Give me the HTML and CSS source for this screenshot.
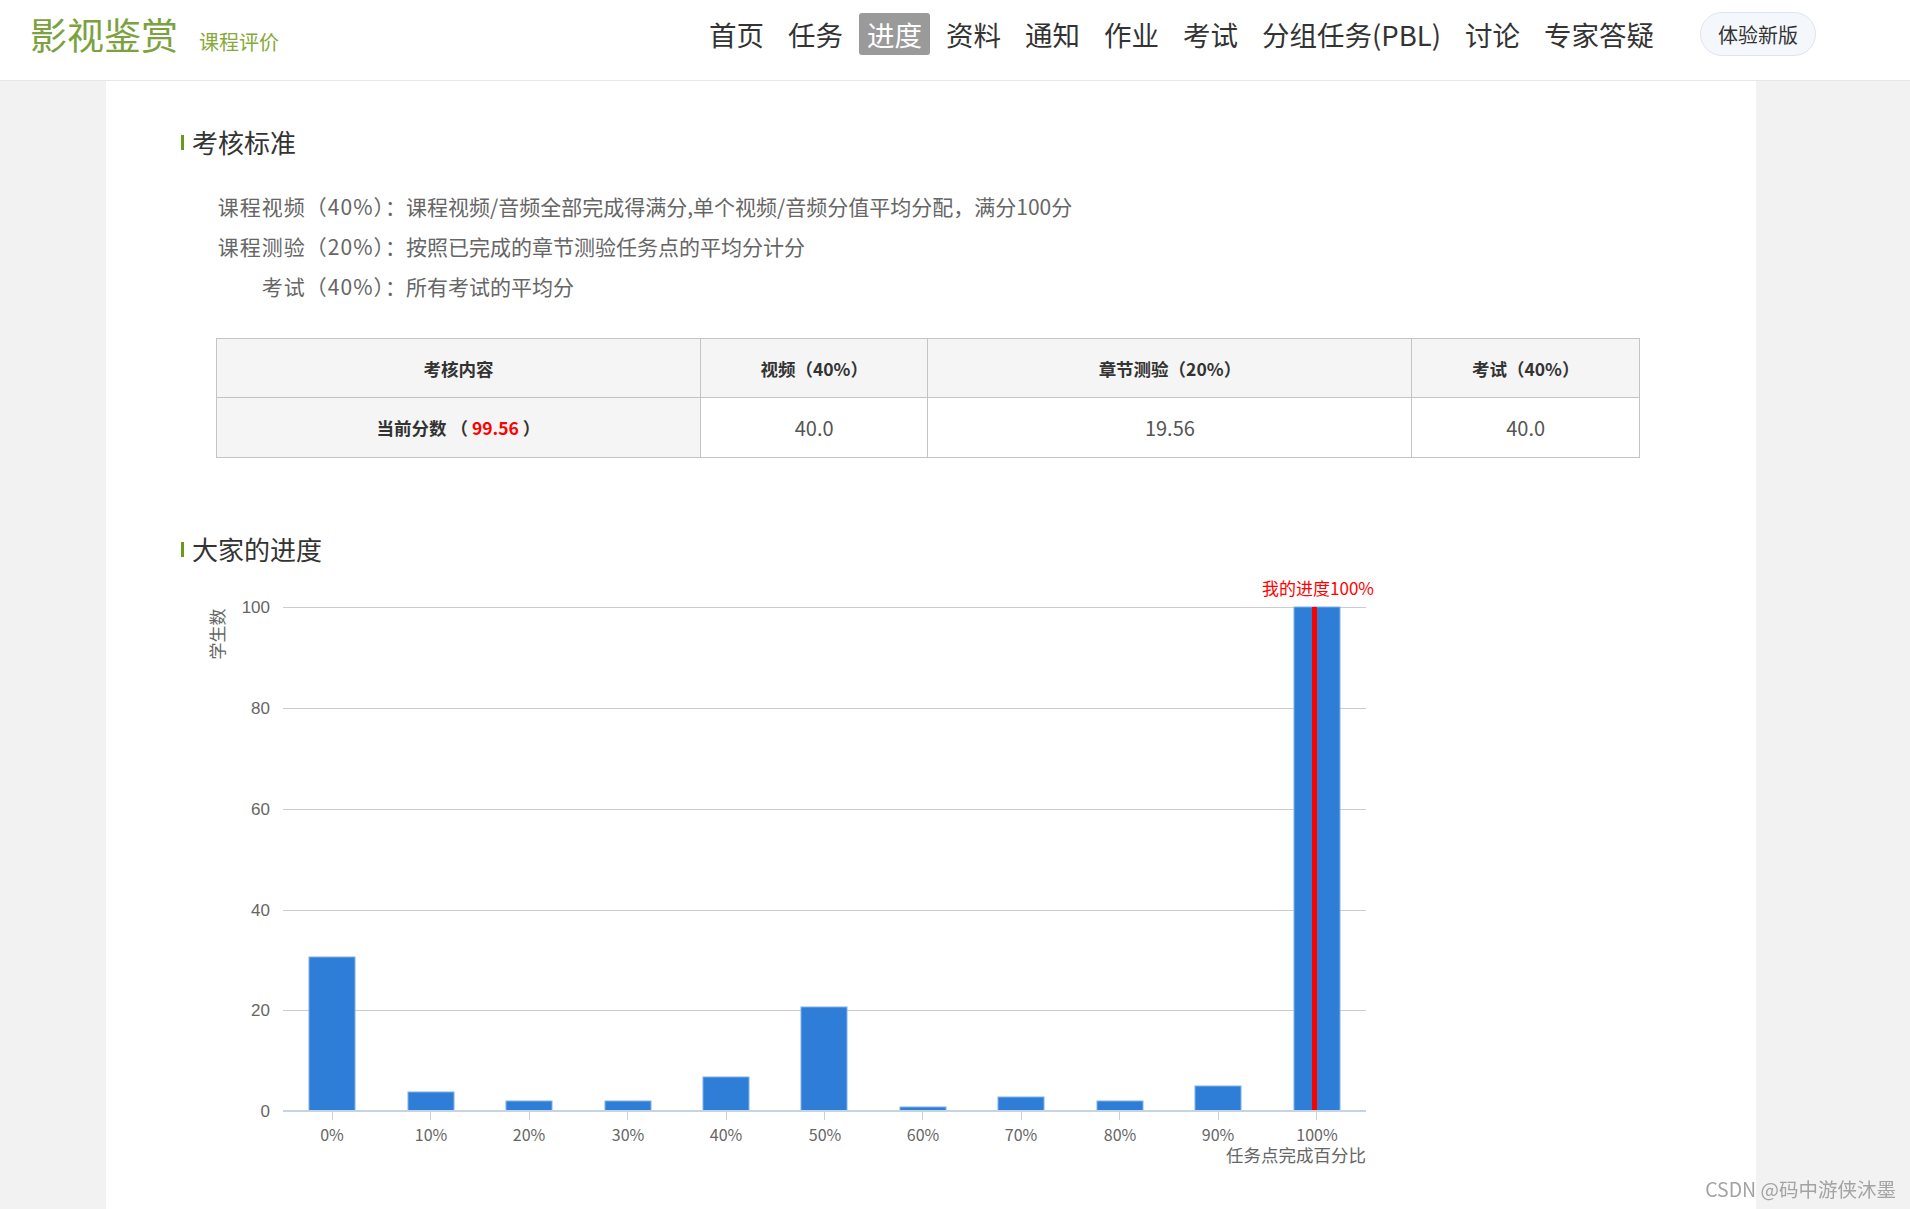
FILE: index.html
```html
<!DOCTYPE html>
<html lang="zh-CN">
<head>
<meta charset="utf-8">
<title>课程评价</title>
<link rel="stylesheet" href="styles.css">
</head>
<body>
<header class="topbar">
  <div class="brand">
    <span class="brand-name">影视鉴赏</span>
    <span class="brand-sub">课程评价</span>
  </div>
  <nav class="nav">
    <a class="nav-item">首页</a>
    <a class="nav-item">任务</a>
    <a class="nav-item active">进度</a>
    <a class="nav-item">资料</a>
    <a class="nav-item">通知</a>
    <a class="nav-item">作业</a>
    <a class="nav-item">考试</a>
    <a class="nav-item">分组任务(PBL)</a>
    <a class="nav-item">讨论</a>
    <a class="nav-item">专家答疑</a>
  </nav>
  <button class="new-btn">体验新版</button>
</header>

<main class="panel">
  <h2 class="sec-title"><i class="mark"></i>考核标准</h2>
  <div class="criteria">
    <div class="crit-label">课程视频（40%）：</div>
    <div class="crit-text">课程视频/音频全部完成得满分,单个视频/音频分值平均分配，满分100分</div>
    <div class="crit-label">课程测验（20%）：</div>
    <div class="crit-text">按照已完成的章节测验任务点的平均分计分</div>
    <div class="crit-label">考试（40%）：</div>
    <div class="crit-text">所有考试的平均分</div>
  </div>

  <table class="score-table">
    <tr class="head-row">
      <th class="c1">考核内容</th>
      <th class="c2">视频（40%）</th>
      <th class="c1">章节测验（20%）</th>
      <th class="c2">考试（40%）</th>
    </tr>
    <tr class="body-row">
      <th>当前分数 （ <span class="red">99.56</span> ）</th>
      <td>40.0</td>
      <td>19.56</td>
      <td>40.0</td>
    </tr>
  </table>

  <h2 class="sec-title sec-two"><i class="mark"></i>大家的进度</h2>

  <svg class="chart" width="1220" height="610" viewBox="0 0 1220 610" xmlns="http://www.w3.org/2000/svg">
    <g class="grid">
      <line x1="83" y1="37.5" x2="1166" y2="37.5"/>
      <line x1="83" y1="138.5" x2="1166" y2="138.5"/>
      <line x1="83" y1="239.5" x2="1166" y2="239.5"/>
      <line x1="83" y1="340.5" x2="1166" y2="340.5"/>
      <line x1="83" y1="440.5" x2="1166" y2="440.5"/>
    </g>
    <g class="ylab">
      <text x="70" y="43">100</text>
      <text x="70" y="144">80</text>
      <text x="70" y="245">60</text>
      <text x="70" y="346">40</text>
      <text x="70" y="446">20</text>
      <text x="70" y="547">0</text>
    </g>
    <text class="ytitle" transform="translate(24,64) rotate(-90)">学生数</text>

    <g class="bars">
      <rect x="109" y="387" width="46" height="154"/>
      <rect x="208" y="522" width="46" height="19"/>
      <rect x="306" y="531" width="46" height="10"/>
      <rect x="405" y="531" width="46" height="10"/>
      <rect x="503" y="507" width="46" height="34"/>
      <rect x="601" y="437" width="46" height="104"/>
      <rect x="700" y="537" width="46" height="4"/>
      <rect x="798" y="527" width="46" height="14"/>
      <rect x="897" y="531" width="46" height="10"/>
      <rect x="995" y="516" width="46" height="25"/>
      <rect x="1094" y="37" width="46" height="504"/>
    </g>
    <rect class="mine" x="1112" y="37" width="5" height="504"/>
    <text class="mine-label" x="1118" y="25">我的进度100%</text>

    <line class="xaxis" x1="83" y1="541" x2="1166" y2="541"/>
    <g class="ticks">
      <line x1="132.5" y1="542" x2="132.5" y2="550"/>
      <line x1="230.5" y1="542" x2="230.5" y2="550"/>
      <line x1="329.5" y1="542" x2="329.5" y2="550"/>
      <line x1="427.5" y1="542" x2="427.5" y2="550"/>
      <line x1="526.5" y1="542" x2="526.5" y2="550"/>
      <line x1="624.5" y1="542" x2="624.5" y2="550"/>
      <line x1="722.5" y1="542" x2="722.5" y2="550"/>
      <line x1="821.5" y1="542" x2="821.5" y2="550"/>
      <line x1="919.5" y1="542" x2="919.5" y2="550"/>
      <line x1="1018.5" y1="542" x2="1018.5" y2="550"/>
      <line x1="1116.5" y1="542" x2="1116.5" y2="550"/>
    </g>
    <g class="xlab">
      <text x="132" y="571">0%</text>
      <text x="231" y="571">10%</text>
      <text x="329" y="571">20%</text>
      <text x="428" y="571">30%</text>
      <text x="526" y="571">40%</text>
      <text x="625" y="571">50%</text>
      <text x="723" y="571">60%</text>
      <text x="821" y="571">70%</text>
      <text x="920" y="571">80%</text>
      <text x="1018" y="571">90%</text>
      <text x="1117" y="571">100%</text>
    </g>
    <text class="xtitle" x="1166" y="592">任务点完成百分比</text>
  </svg>
</main>

<div class="watermark">CSDN @码中游侠沐墨</div>
</body>
</html>
```

FILE: styles.css
```css
* { box-sizing: border-box; }

html, body {
  margin: 0;
  padding: 0;
}

body {
  background: #f2f2f2;
  font-family: "Noto Sans CJK SC", "Noto Sans", sans-serif;
  color: #333;
  overflow: hidden;
}

/* ---------- header ---------- */
.topbar {
  height: 81px;
  background: #fff;
  border-bottom: 1px solid #e6e6e6;
  display: flex;
  align-items: center;
  padding: 0 94px 12px 30px;
}

.brand {
  display: flex;
  align-items: baseline;
}

.brand-name {
  font-size: 37px;
  line-height: 1;
  color: #7ba23f;
}

.brand-sub {
  font-size: 20px;
  line-height: 1;
  color: #86a93a;
  margin-left: 21px;
}

.nav {
  margin-left: auto;
  display: flex;
  gap: 8px;
}

.nav-item {
  display: block;
  height: 42px;
  line-height: 42px;
  padding: 0 8px;
  font-size: 27.5px;
  color: #333;
  border-radius: 3px;
  cursor: pointer;
}

.nav-item.active {
  background: #9a9a9a;
  color: #fff;
}

.new-btn {
  margin-left: 38px;
  height: 44px;
  padding: 0 17px;
  border: 1px solid #dde5ef;
  background: #f4f8fd;
  border-radius: 22px;
  font-family: inherit;
  font-size: 20px;
  color: #333;
}

/* ---------- panel ---------- */
.panel {
  margin-left: 106px;
  width: 1650px;
  background: #fff;
  padding: 43px 0 29px 75px;
}

.sec-title {
  margin: 0;
  font-size: 26px;
  line-height: 36px;
  font-weight: normal;
  color: #333;
  display: flex;
  align-items: center;
}

.mark {
  display: inline-block;
  width: 3px;
  height: 15px;
  background: #6b9a1b;
  margin-right: 8px;
}

.sec-two {
  margin-top: 73px;
}

.criteria {
  margin: 26px 0 0 0;
  display: grid;
  grid-template-columns: 225px 1fr;
  font-size: 21px;
  line-height: 40px;
  color: #666;
}

.crit-label {
  text-align: right;
  letter-spacing: 1px;
  margin-right: -1px;
}

/* ---------- table ---------- */
.score-table {
  margin: 32px 0 0 35px;
  width: 1424px;
  border-collapse: collapse;
  table-layout: fixed;
}

.score-table th,
.score-table td {
  border: 1px solid #c4c4c4;
  text-align: center;
  padding: 0;
}

.score-table .c1 { width: 34%; }
.score-table .c2 { width: 16%; }

.head-row { height: 59px; }
.body-row { height: 60px; }

.score-table th {
  background: #f5f5f5;
  font-size: 17.5px;
  font-weight: bold;
  color: #333;
}

.score-table td {
  font-size: 20px;
  color: #555;
}

.red { color: #f00; }

/* ---------- chart ---------- */
.chart {
  display: block;
  margin: 3px 0 0 19px;
}

.grid line {
  stroke: #cccccc;
  stroke-width: 1;
}

.ylab text {
  font-family: "Liberation Sans", sans-serif;
  font-size: 17px;
  fill: #666;
  text-anchor: end;
}

.ytitle {
  font-size: 17px;
  fill: #666;
  text-anchor: middle;
}

.bars rect {
  fill: #2e7ed8;
  stroke: #7fb0ea;
  stroke-width: 1;
}

.mine { fill: #ff0000; }

.mine-label {
  font-size: 17px;
  fill: #ff0000;
  text-anchor: middle;
}

.xaxis {
  stroke: #c6d3e2;
  stroke-width: 2;
}

.ticks line {
  stroke: #c6d3e2;
  stroke-width: 1;
}

.xlab text {
  font-size: 16px;
  fill: #666;
  text-anchor: middle;
}

.xtitle {
  font-size: 17.5px;
  fill: #666;
  text-anchor: end;
}

/* ---------- watermark ---------- */
.watermark {
  position: fixed;
  right: 14px;
  bottom: 6px;
  font-size: 19.5px;
  color: #a3a3a3;
}
```
